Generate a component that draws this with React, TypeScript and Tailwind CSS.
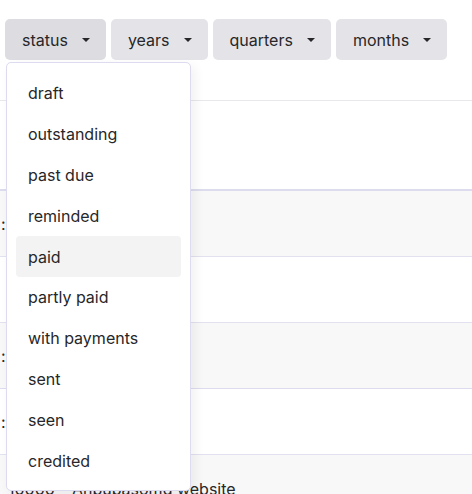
import React from "react";

const Caret = () => (
  <svg width="10" height="6" viewBox="0 0 10 6" className="ml-[13px] shrink-0">
    <path d="M1 1 L9 1 L5 5 Z" fill="#27272a" />
  </svg>
);

const FilterButton = ({ label, active }: { label: string; active?: boolean }) => (
  <button
    className={`flex h-[41px] items-center rounded-[5px] pl-[17px] pr-[15px] text-[16px] text-[#27272a] ${
      active ? "bg-[#dcdce1]" : "bg-[#e4e4e8]"
    }`}
  >
    <span>{label}</span>
    <Caret />
  </button>
);

const items = [
  "draft",
  "outstanding",
  "past due",
  "reminded",
  "paid",
  "partly paid",
  "with payments",
  "sent",
  "seen",
  "credited",
];

export default function App() {
  return (
    <div
      className="relative h-[494px] w-[472px] overflow-hidden bg-white"
      style={{ fontFamily: "Inter, 'Noto Sans', sans-serif" }}
    >
      <div className="flex gap-[5px] pl-[5px] pt-[19px]">
        <FilterButton label="status" active />
        <FilterButton label="years" />
        <FilterButton label="quarters" />
        <FilterButton label="months" />
      </div>

      {/* background table */}
      <div className="flex flex-col text-[16px] text-[#27272a]">
        <div className="h-[41px] border-b border-[#e8e8ec]" />
        <div className="h-[90px] border-b-2 border-[#dddcef]" />
        <div className="flex h-[66px] items-center border-b border-[#e2e1f0] bg-[#f8f8f8] pl-[1px]">:</div>
        <div className="h-[66px] border-b border-[#e2e1f0] bg-white" />
        <div className="flex h-[66px] items-center border-b border-[#dddcef] bg-[#f8f8f8] pl-[1px]">:</div>
        <div className="flex h-[66px] items-center border-b border-[#e2e1f0] bg-white pl-[1px]">:</div>
        <div className="flex h-[66px] items-start bg-[#f8f8f8] pt-[22px]">
          <span className="pl-[8px]">10000</span>
          <span className="pl-[17px]">Anbubasomg website</span>
        </div>
      </div>

      {/* dropdown */}
      <div className="absolute left-[6px] top-[62px] w-[185px] rounded-[5px] border border-[#dcdbf0] bg-white px-[9px] pb-[9px] pt-[10px] shadow-[4px_4px_12px_rgba(0,0,0,0.06)]">
        {items.map((it) => (
          <div
            key={it}
            className={`flex h-[40.8px] items-center rounded-[4px] px-[12px] text-[16px] text-[#27272a] ${
              it === "paid" ? "bg-[#f3f3f4]" : ""
            }`}
          >
            {it}
          </div>
        ))}
      </div>
    </div>
  );
}
